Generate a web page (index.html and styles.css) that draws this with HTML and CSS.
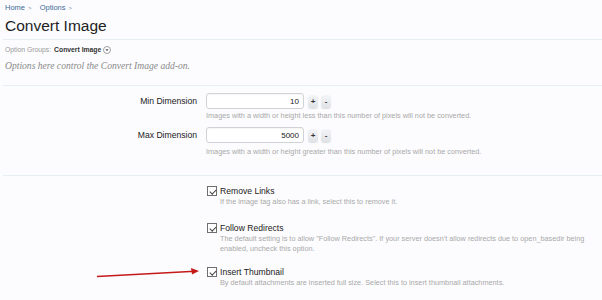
FILE: index.html
```html
<!DOCTYPE html>
<html lang="en">

<head>
    <meta charset="UTF-8">
    <title>Convert Image - Options</title>
    <link rel="stylesheet" href="styles.css">
</head>

<body>
    <div class="page">
        <div class="head">
            <div class="crumbs">
                <a href="#">Home</a><span class="sep">&gt;</span>
                <a href="#">Options</a><span class="sep">&gt;</span>
            </div>
            <h1 class="title">Convert Image</h1>
        </div>

        <div class="intro">
            <div class="groups">
                Option Groups: <b>Convert Image</b>
                <span class="drop">
                    <svg width="8" height="8" viewBox="0 0 8 8">
                        <circle cx="4" cy="4" r="3.5" fill="#fff" stroke="#888" stroke-width="0.8" />
                        <path d="M2.4 3.3 L5.6 3.3 L4 5.2 Z" fill="#555" />
                    </svg>
                </span>
            </div>
            <p class="explain">Options here control the Convert Image add-on.</p>
        </div>

        <!-- spin box options -->
        <div class="block">
            <div class="row">
                <label class="name" for="minDim">Min Dimension</label>
                <div class="ctrl">
                    <div class="spin">
                        <input type="text" id="minDim" class="num" value="10">
                        <span class="btn">+</span>
                        <span class="btn">-</span>
                    </div>
                    <p class="hint">Images with a width or height less than this number of pixels will not be converted.</p>
                </div>
            </div>
            <div class="row">
                <label class="name" for="maxDim">Max Dimension</label>
                <div class="ctrl">
                    <div class="spin">
                        <input type="text" id="maxDim" class="num" value="5000">
                        <span class="btn">+</span>
                        <span class="btn">-</span>
                    </div>
                    <p class="hint">Images with a width or height greater than this number of pixels will not be converted.</p>
                </div>
            </div>
        </div>

        <!-- checkbox options -->
        <div class="block checks">
            <div class="check-row">
                <label class="check"><span class="box"></span>Remove Links</label>
                <p class="hint">If the image tag also has a link, select this to remove it.</p>
            </div>
            <div class="check-row tight">
                <label class="check"><span class="box"></span>Follow Redirects</label>
                <p class="hint">The default setting is to allow "Follow Redirects". If your server doesn't allow redirects due to open_basedir being<br>enabled, uncheck this option.</p>
            </div>
            <div class="check-row">
                <label class="check"><span class="box"></span>Insert Thumbnail</label>
                <p class="hint">By default attachments are inserted full size. Select this to insert thumbnail attachments.</p>
            </div>
        </div>
    </div>

    <svg class="arrow" width="110" height="14" viewBox="0 0 110 14">
        <path d="M2 10.5 L100 5.2" stroke="#c41a1a" stroke-width="1.6" fill="none" />
        <path d="M104 5 L96 2 L97 8.4 Z" fill="#c41a1a" />
    </svg>
</body>

</html>
```

FILE: styles.css
```css
body {
    margin: 0;
    padding: 0;
    background-color: #fcfcfe;
    font-family: "Liberation Sans", Arial, sans-serif;
    color: #222;
    position: relative;
}

.page {
    padding-left: 3px;
}

.head {
    border-bottom: 1px solid #e6eef2;
    padding-bottom: 2px;
}

.crumbs {
    height: 15px;
    line-height: 16px;
    font-size: 7.5px;
    padding-left: 2px;
}

.crumbs a {
    color: #3d6a96;
    text-decoration: none;
}

.crumbs .sep {
    color: #7a8fa3;
    font-size: 6px;
    margin: 0 6px 0 3px;
}

.title {
    margin: 0;
    padding-left: 2px;
    font-size: 15.5px;
    font-weight: normal;
    line-height: 22px;
    color: #1e1e1e;
}

.intro {
    padding-left: 2px;
    padding-top: 4px;
    padding-bottom: 12px;
    border-bottom: 1px solid #e6f0f2;
}

.groups {
    font-size: 6.8px;
    line-height: 12px;
    color: #9a9a9a;
    display: flex;
    align-items: center;
}

.groups b {
    color: #333;
    margin-left: 3px;
}

.drop {
    display: inline-flex;
    margin-left: 2px;
}

.explain {
    margin: 3px 0 0;
    font-family: "Liberation Serif", serif;
    font-style: italic;
    font-size: 9.6px;
    line-height: 14px;
    color: #8a8a8a;
}

.block {
    padding: 7px 0 17px;
    border-bottom: 1px solid #e6f0f2;
}

.row {
    display: grid;
    grid-template-columns: 194px 1fr;
    column-gap: 9px;
    margin-bottom: 5px;
}

.row:last-child {
    margin-bottom: 0;
}

.name {
    text-align: right;
    font-size: 8.6px;
    line-height: 16px;
    color: #222;
}

.spin {
    display: flex;
    align-items: center;
    gap: 3px;
    height: 16px;
}

.num {
    box-sizing: border-box;
    width: 98px;
    height: 16px;
    margin: 0 1px 0 0;
    padding: 0 4px;
    border: 1px solid #cfd3d6;
    border-radius: 3px;
    background: #fff;
    box-shadow: inset 0 1px 1px rgba(0, 0, 0, 0.04);
    font-family: "Liberation Sans", Arial, sans-serif;
    font-size: 8px;
    text-align: right;
    color: #222;
}

.btn {
    display: flex;
    align-items: center;
    justify-content: center;
    width: 10px;
    height: 13px;
    border-radius: 3px;
    background: linear-gradient(#f4f5f7, #dfe2e6);
    box-shadow: 0 1px 1px rgba(0, 0, 0, 0.12);
    font-size: 8px;
    font-weight: bold;
    color: #333;
}

.hint {
    margin: 1px 0 0;
    font-size: 7.3px;
    line-height: 12px;
    color: #a9a9a9;
}

.row:last-child .hint {
    margin-top: 3px;
}

.checks {
    padding: 9px 0 0 204px;
    border-bottom: none;
}

.check-row {
    margin-bottom: 15px;
}

.check-row.tight {
    margin-bottom: 12px;
}

.check {
    display: flex;
    align-items: center;
    font-size: 8.6px;
    line-height: 12px;
    color: #222;
}

.box {
    position: relative;
    box-sizing: border-box;
    width: 10px;
    height: 10px;
    margin-right: 3px;
    border: 1px solid #6f6f6f;
    background: #fff;
}

.box::after {
    content: "";
    position: absolute;
    left: 2.5px;
    top: 0.5px;
    width: 2.5px;
    height: 5px;
    border: solid #444;
    border-width: 0 1.2px 1.2px 0;
    transform: rotate(45deg);
}

.check-row .hint {
    margin: 0;
    padding-left: 13px;
    line-height: 10px;
}

.arrow {
    position: absolute;
    left: 95px;
    top: 266px;
}
```
